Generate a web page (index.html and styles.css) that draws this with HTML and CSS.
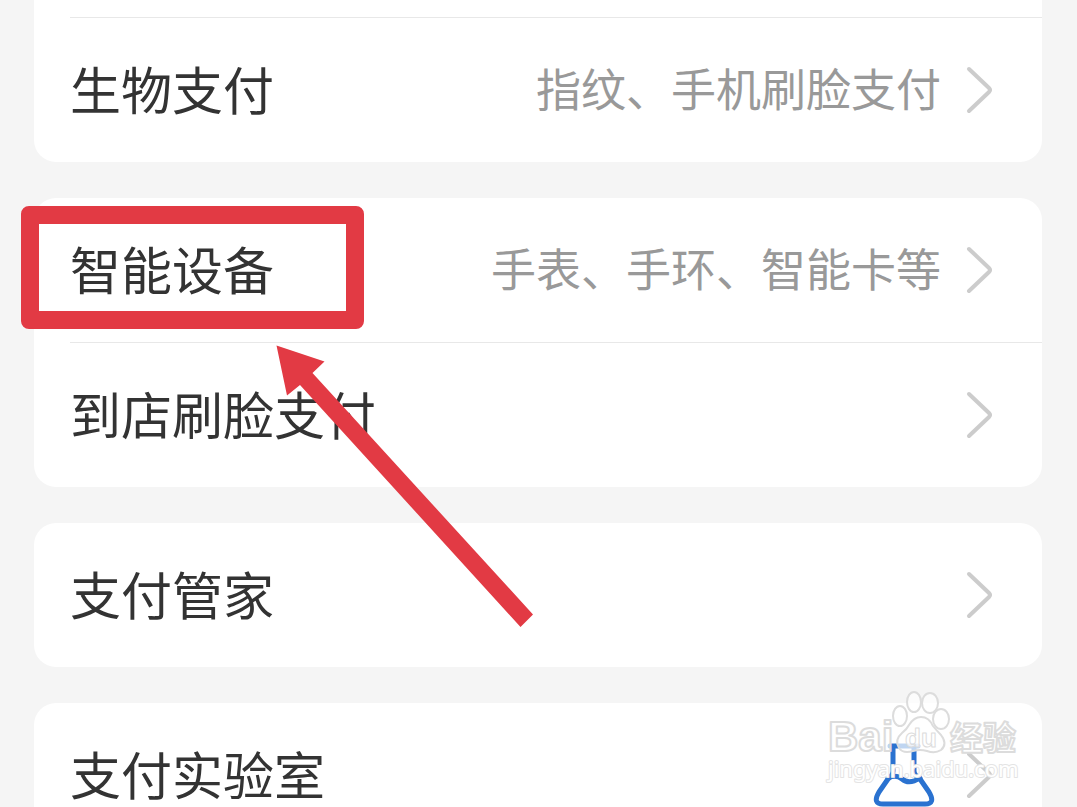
FILE: index.html
```html
<!DOCTYPE html>
<html lang="zh-CN">
<head>
    <meta charset="UTF-8">
    <meta name="viewport" content="width=device-width, initial-scale=1.0">
    <title>支付设置</title>
    <link rel="stylesheet" href="styles.css">
</head>
<body>
    <main class="settings">
        <ul class="card card-cut">
            <li class="row">
                <a href="#biometric">
                    <span class="title">生物支付</span>
                    <span class="detail">指纹、手机刷脸支付</span>
                    <svg class="chevron" viewBox="0 0 28 48" aria-hidden="true"><path d="M3 3 L23 22 Q25 24 23 26 L3 45"/></svg>
                </a>
            </li>
        </ul>
        <ul class="card">
            <li class="row">
                <a href="#devices">
                    <span class="title">智能设备</span>
                    <span class="detail">手表、手环、智能卡等</span>
                    <svg class="chevron" viewBox="0 0 28 48" aria-hidden="true"><path d="M3 3 L23 22 Q25 24 23 26 L3 45"/></svg>
                </a>
                <div class="highlight"></div>
                <svg class="arrow" viewBox="0 0 258 282" aria-hidden="true">
                    <path d="M0.5 -0.5 L48.5 15.5 L36.5 27 L257 268.5 L244.5 281 L24 39 L11 49.5 Z"/>
                </svg>
            </li>
            <li class="row">
                <a href="#store-face">
                    <span class="title">到店刷脸支付</span>
                    <svg class="chevron" viewBox="0 0 28 48" aria-hidden="true"><path d="M3 3 L23 22 Q25 24 23 26 L3 45"/></svg>
                </a>
            </li>
        </ul>
        <ul class="card">
            <li class="row">
                <a href="#manager">
                    <span class="title">支付管家</span>
                    <svg class="chevron" viewBox="0 0 28 48" aria-hidden="true"><path d="M3 3 L23 22 Q25 24 23 26 L3 45"/></svg>
                </a>
            </li>
        </ul>
        <ul class="card">
            <li class="row">
                <a href="#lab">
                    <span class="title">支付实验室</span>
                    <svg class="flask" viewBox="0 0 70 64" aria-hidden="true">
                        <path d="M19 3 H47 M22 3 V28 Q22 32 17 36 L8 49 Q1 61 12 61 H54 Q65 61 58 49 L49 36 Q43 32 43 28 V3"/>
                        <path d="M17 35 Q25 31 31 36 Q38 42 49 35"/>
                    </svg>
                    <svg class="chevron" viewBox="0 0 28 48" aria-hidden="true"><path d="M3 3 L23 22 Q25 24 23 26 L3 45"/></svg>
                </a>
            </li>
        </ul>
        <svg class="watermark" viewBox="0 0 200 100">
            <text class="mark-name" x="6" y="63">Bai</text>
            <text class="mark-cn" x="128" y="62">经验</text>
            <ellipse cx="78" cy="28" rx="7" ry="10"/>
            <ellipse cx="92" cy="14" rx="7" ry="10"/>
            <ellipse cx="108" cy="15" rx="8" ry="10"/>
            <ellipse cx="119" cy="31" rx="8" ry="10"/>
            <path d="M99 29 Q107 29 111 38 Q115 43 119 47 Q126 56 119 62 Q113 66 105 63 Q98 61 91 63 Q81 66 77 60 Q72 52 80 45 Q85 41 87 37 Q92 29 99 29 Z"/>
            <text class="mark-du" x="83" y="59">du</text>
            <text class="mark-url" x="6" y="89">jingyan.baidu.com</text>
        </svg>
    </main>
</body>
</html>
```

FILE: styles.css
```css
* {
    box-sizing: border-box;
}

body {
    margin: 0;
    background-color: #f5f5f5;
    font-family: "Noto Sans CJK SC", sans-serif;
    color: #333;
}

.settings {
    position: relative;
    display: flex;
    flex-direction: column;
    gap: 36px;
    height: 100vh;
    padding: 0 35px 0 34px;
    overflow: hidden;
}

.card {
    flex: none;
    margin: 0;
    padding: 0;
    list-style: none;
    background-color: #fff;
    border-radius: 22px;
}

/* the row above is scrolled out of view */
.card-cut {
    padding-top: 17px;
    border-radius: 0 0 22px 22px;
}

.row {
    position: relative;
}

.row a {
    display: flex;
    align-items: center;
    gap: 25px;
    height: 144px;
    padding: 0 48px 0 36px;
    color: inherit;
    text-decoration: none;
}

.row + .row::before,
.card-cut .row::before {
    content: "";
    display: block;
    height: 1px;
    margin-left: 36px;
    background-color: #e8e8e8;
}

.title {
    flex: 1;
    padding-bottom: 4px;
    font-size: 51px;
    line-height: 72px;
}

.detail {
    padding-bottom: 4px;
    font-size: 45px;
    line-height: 64px;
    color: #999;
}

.chevron {
    width: 28px;
    height: 48px;
    fill: none;
    stroke: #ccc;
    stroke-width: 4;
    stroke-linecap: round;
}

.flask {
    width: 70px;
    height: 64px;
    fill: none;
    stroke: #2a72d0;
    stroke-width: 5;
    stroke-linecap: round;
    stroke-linejoin: round;
}

.highlight {
    position: absolute;
    top: 8px;
    left: -13px;
    width: 343px;
    height: 123px;
    border: 18px solid #e23a44;
    border-radius: 8px;
}

.arrow {
    position: absolute;
    top: 148px;
    left: 242px;
    z-index: 1;
    width: 258px;
    height: 282px;
    fill: #e23a44;
    overflow: visible;
    pointer-events: none;
}

.watermark {
    position: absolute;
    right: 55px;
    bottom: 19px;
    width: 200px;
    height: 100px;
    fill: rgba(255, 255, 255, 0.7);
    stroke: #dcdcdc;
    stroke-width: 2;
    stroke-linejoin: round;
    pointer-events: none;
}

.mark-name {
    font: bold 42px "Liberation Sans", sans-serif;
}

.mark-du {
    font: bold 26px "Liberation Sans", sans-serif;
    stroke-width: 1;
}

.mark-cn {
    font: bold 33px "Noto Sans CJK SC", sans-serif;
}

/* the outline goes behind the letters so that they stay white */
.mark-url {
    font: 22px "Noto Sans", sans-serif;
    fill: #fff;
    stroke: #e4e4e4;
    paint-order: stroke;
}
```
